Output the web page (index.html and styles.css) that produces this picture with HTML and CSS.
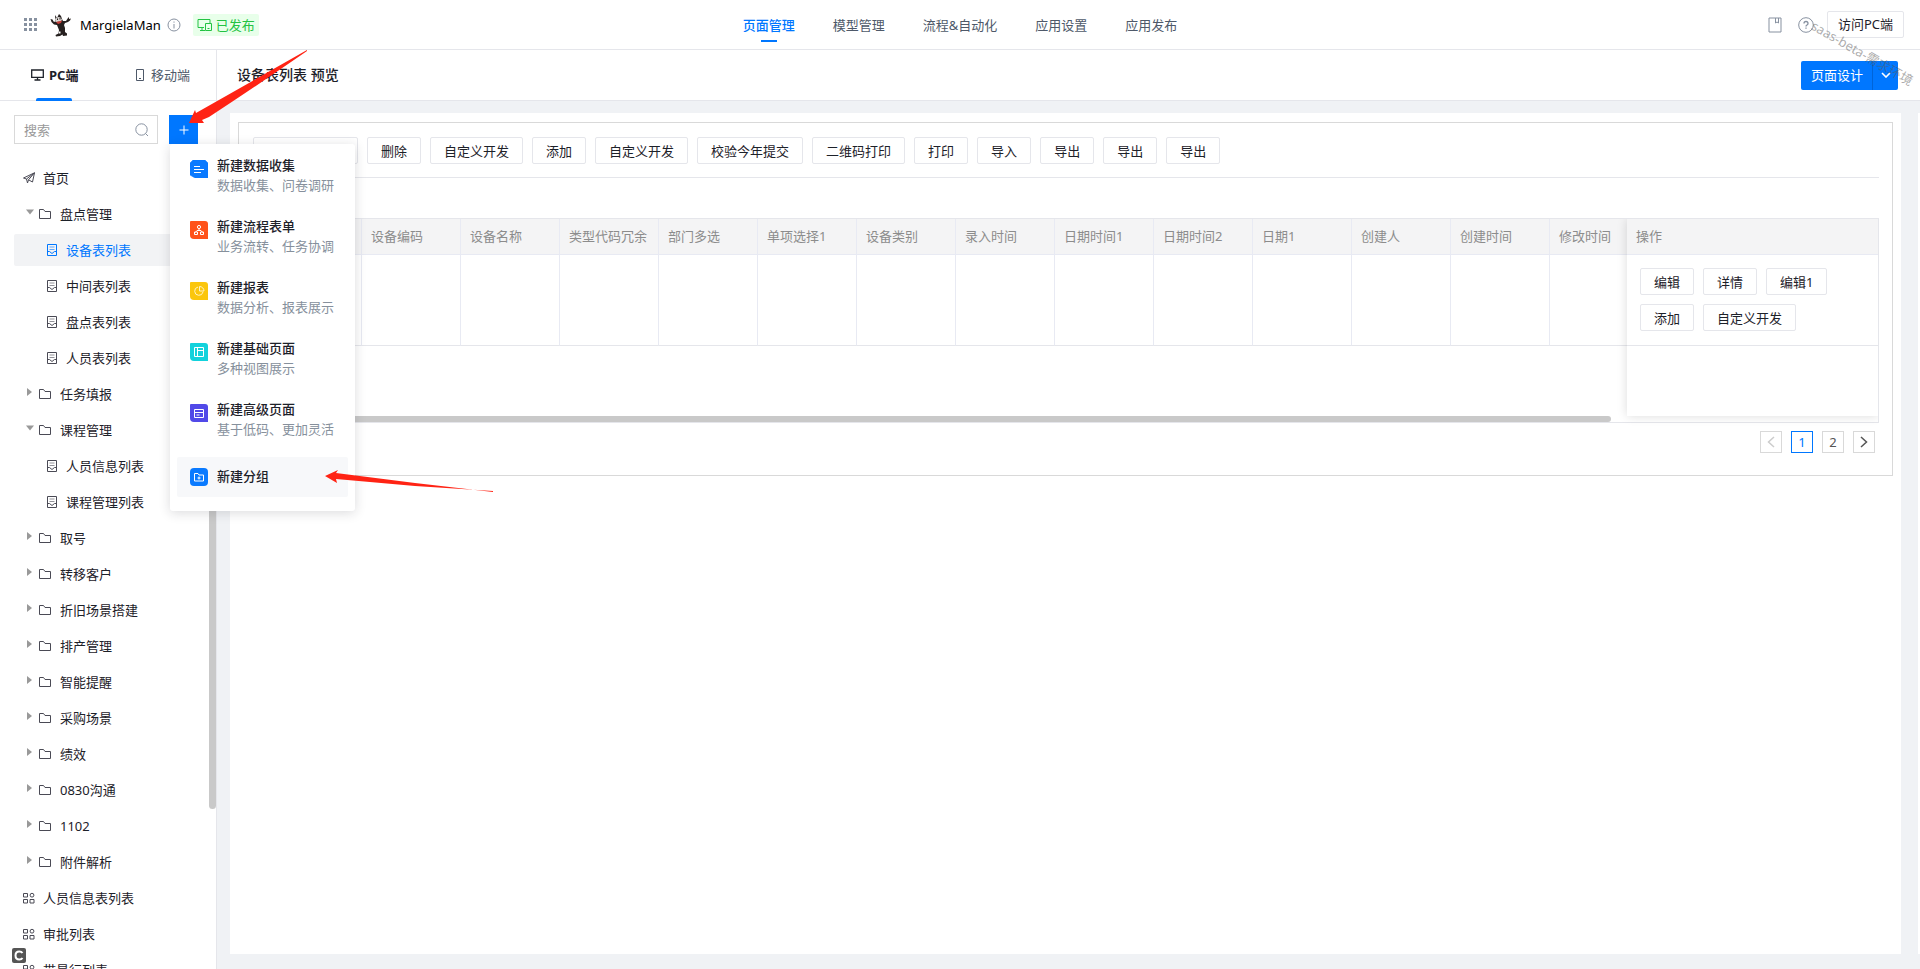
FILE: index.html
```html
<!DOCTYPE html>
<html lang="zh-CN">
<head>
<meta charset="utf-8">
<title>MargielaMan</title>
<link rel="stylesheet" href="styles.css">
</head>
<body>
<svg class="defs" aria-hidden="true">
  <symbol id="folder" viewBox="0 0 12 12"><path d="M.5 1.500h4l1.500 2h5.500v7H.5z" fill="none" stroke="currentColor"/></symbol>
  <symbol id="page" viewBox="0 0 12 12"><path d="M1.500.5h9v11h-9zM1.500 7.500h2L6 9.500l2.500-2h2" fill="none" stroke="currentColor"/><path d="M3.500 3h5M3.500 5.500h5" stroke="currentColor" stroke-opacity=".6"/></symbol>
  <symbol id="apps" viewBox="0 0 12 12"><g fill="none" stroke="currentColor"><path d="M.5 1.500h4v3.500h-4zM.5 7.500h4v3.500h-4zM7 7.500h4v3.500H7z"/><circle cx="9" cy="3.200" r="1.900"/></g></symbol>
  <symbol id="caret" viewBox="0 0 8 8"><path d="M1 0l5 4-5 4z" fill="#999"/></symbol>
  <symbol id="caret-open" viewBox="0 0 8 8"><path d="M0 1.500h8l-4 5z" fill="#999"/></symbol>
</svg>

<header class="topbar">
  <div class="brand">
    <svg class="grid-icon" viewBox="0 0 13 13" fill="#8791a0"><path d="M0 0h3v3H0zM5 0h3v3H5zM10 0h3v3h-3zM0 5h3v3H0zM5 5h3v3H5zM10 5h3v3h-3zM0 10h3v3H0zM5 10h3v3H5zM10 10h3v3h-3z"/></svg>
    <svg class="logo" viewBox="0 0 22 24"><path d="M5 2l2 3 2-4 2 2 1 3 1 2 3 0 2-3 1-1 0 2 2-.5-1 2-2 1.500-3 1-1 2 1 3 0 4 2 1.500 0 2-4 .5-.5-1.500L10 23l-4 .5-.5-1.500 3-1.500L9 17 7 12 4 11.500 1.500 9 .5 6l2 .5 1 2 2 .5z" fill="#26201f"/><path d="M5 6q4-4 7 .5l-1 2-5 .5z" fill="#d9d5d2"/><path d="M7 5.500h1v1.500H7zM9.500 5h1v1.500h-1z" fill="#26201f"/><path d="M6 9l6-1.500-1 2.500-3 1z" fill="#c9403a"/><path d="M9 18.500h1.500v2H9z" fill="#fff"/></svg>
    <span class="app-name">MargielaMan</span>
    <svg class="info" viewBox="0 0 14 14" fill="none" stroke="#8791a0"><circle cx="7" cy="7" r="6"/><path d="M7 6v4.500M7 3.500v1.200"/></svg>
    <span class="status"><svg viewBox="0 0 15 12" fill="none" stroke="currentColor"><path d="M13 4V.5H1v8h6M3 11.500h5M5 8.500v3M8.500 4.500h6v7h-6zM10.500 9.500h2"/></svg>已发布</span>
  </div>
  <nav class="main-nav">
    <a class="active" href="#">页面管理</a>
    <a href="#">模型管理</a>
    <a href="#">流程&amp;自动化</a>
    <a href="#">应用设置</a>
    <a href="#">应用发布</a>
  </nav>
  <div class="top-actions">
    <svg class="book" viewBox="0 0 14 16" fill="none" stroke="#8791a0"><path d="M1 1h12v14H1zM7.500 1v5l1.500-1 1.500 1V1"/></svg>
    <svg class="help" viewBox="0 0 16 16" fill="none" stroke="#8791a0"><circle cx="8" cy="8" r="7.300"/><path d="M6 6.500q0-2 2-2t2 2q0 1-1 1.500t-1 1.500M8 10.500v1.300" stroke-width="1.300"/></svg>
    <button class="btn visit" type="button">访问PC端</button>
  </div>
  <span class="watermark">saas-beta-需求环境</span>
</header>

<div class="body">
  <aside class="sidebar">
    <div class="tabs" role="tablist">
      <button class="tab active" role="tab" type="button"><svg viewBox="0 0 13 12" fill="none" stroke="currentColor" stroke-width="1.300"><path d="M.7 1h11.600v7.300H.7zM6.500 8.300v2.500M3.500 11h6"/></svg>PC端</button>
      <button class="tab" role="tab" type="button"><svg class="phone" viewBox="0 0 8 12" fill="none" stroke="currentColor"><path d="M.5.5h7v11h-7zM3 9.500h2"/></svg>移动端</button>
    </div>
    <div class="search-row">
      <label class="search"><input type="text" placeholder="搜索" aria-label="搜索"><svg viewBox="0 0 14 14" fill="none" stroke="#8791a0"><circle cx="6.500" cy="6.500" r="5.700"/><path d="M10.500 10.500l2.500 2.500"/></svg></label>
      <button class="add" type="button" aria-label="新建"><svg viewBox="0 0 10 10"><path d="M5 .5v9M.5 5h9" stroke="#fff"/></svg></button>
    </div>
    <div class="tree-wrap">
      <ul class="tree">
        <li class="root"><svg viewBox="0 0 12 12" fill="none" stroke="currentColor"><path d="M.5 6L11.500.8 9.500 10 5.500 7.800 4.500 11 3.500 7zM3.500 7L11.500.8 5.500 7.800"/></svg>首页</li>
        <li class="group"><svg class="caret"><use href="#caret-open"/></svg><svg><use href="#folder"/></svg>盘点管理</li>
        <li class="leaf selected"><svg><use href="#page"/></svg>设备表列表</li>
        <li class="leaf"><svg><use href="#page"/></svg>中间表列表</li>
        <li class="leaf"><svg><use href="#page"/></svg>盘点表列表</li>
        <li class="leaf"><svg><use href="#page"/></svg>人员表列表</li>
        <li class="group"><svg class="caret"><use href="#caret"/></svg><svg><use href="#folder"/></svg>任务填报</li>
        <li class="group"><svg class="caret"><use href="#caret-open"/></svg><svg><use href="#folder"/></svg>课程管理</li>
        <li class="leaf"><svg><use href="#page"/></svg>人员信息列表</li>
        <li class="leaf"><svg><use href="#page"/></svg>课程管理列表</li>
        <li class="group"><svg class="caret"><use href="#caret"/></svg><svg><use href="#folder"/></svg>取号</li>
        <li class="group"><svg class="caret"><use href="#caret"/></svg><svg><use href="#folder"/></svg>转移客户</li>
        <li class="group"><svg class="caret"><use href="#caret"/></svg><svg><use href="#folder"/></svg>折旧场景搭建</li>
        <li class="group"><svg class="caret"><use href="#caret"/></svg><svg><use href="#folder"/></svg>排产管理</li>
        <li class="group"><svg class="caret"><use href="#caret"/></svg><svg><use href="#folder"/></svg>智能提醒</li>
        <li class="group"><svg class="caret"><use href="#caret"/></svg><svg><use href="#folder"/></svg>采购场景</li>
        <li class="group"><svg class="caret"><use href="#caret"/></svg><svg><use href="#folder"/></svg>绩效</li>
        <li class="group"><svg class="caret"><use href="#caret"/></svg><svg><use href="#folder"/></svg>0830沟通</li>
        <li class="group"><svg class="caret"><use href="#caret"/></svg><svg><use href="#folder"/></svg>1102</li>
        <li class="group"><svg class="caret"><use href="#caret"/></svg><svg><use href="#folder"/></svg>附件解析</li>
        <li class="root"><svg><use href="#apps"/></svg>人员信息表列表</li>
        <li class="root"><svg><use href="#apps"/></svg>审批列表</li>
        <li class="root"><svg><use href="#apps"/></svg>带最行列表</li>
      </ul>
      <div class="side-scroll"></div>
    </div>

    <div class="create-menu" role="menu">
      <button class="create" type="button" role="menuitem"><svg viewBox="0 0 18 18"><path d="M3 0h12l3 3v15H5L0 15V3z" fill="#0a7aff" stroke="#0a7aff" stroke-linejoin="round" stroke-width=".5"/><path d="M4 6.500h6M4 9.500h10M4 12.500h7" stroke="#fff"/></svg><span><b>新建数据收集</b><small>数据收集、问卷调研</small></span></button>
      <button class="create" type="button" role="menuitem"><svg viewBox="0 0 18 18"><path d="M1 0h14q3 0 3 3v15H4q-4 0-4-4V1q0-1 1-1z" fill="#ff5219"/><g fill="none" stroke="#fff"><circle cx="9" cy="6" r="1.600"/><path d="M9 7.500v2M5.500 11.500l1.500-2h4l1.500 2"/><path d="M4.500 11h3v2.500h-3zM10.500 11h3v2.500h-3z"/></g></svg><span><b>新建流程表单</b><small>业务流转、任务协调</small></span></button>
      <button class="create" type="button" role="menuitem"><svg viewBox="0 0 18 18"><path d="M1 0h14q3 0 3 3v15H4q-4 0-4-4V1q0-1 1-1z" fill="#fbc60d"/><path d="M8 5a4.200 4.200 0 1 0 5 5M9.500 4.500V9H14A4.500 4.500 0 0 0 9.500 4.500z" fill="none" stroke="#fff3c4"/></svg><span><b>新建报表</b><small>数据分析、报表展示</small></span></button>
      <button class="create" type="button" role="menuitem"><svg viewBox="0 0 18 18"><path d="M1 0h14q3 0 3 3v15H4q-4 0-4-4V1q0-1 1-1z" fill="#12d2dc"/><path d="M4.500 4.500h9v9h-9zM7.500 4.500v9M7.500 7.500h6" fill="none" stroke="#fff"/></svg><span><b>新建基础页面</b><small>多种视图展示</small></span></button>
      <button class="create" type="button" role="menuitem"><svg viewBox="0 0 18 18"><path d="M1 0h14q3 0 3 3v15H4q-4 0-4-4V1q0-1 1-1z" fill="#5149e8"/><path d="M4.500 5.500h9v8h-9zM4.500 8.500h9M6.500 11h3" fill="none" stroke="#fff"/></svg><span><b>新建高级页面</b><small>基于低码、更加灵活</small></span></button>
      <button class="create hover" type="button" role="menuitem"><svg viewBox="0 0 18 18"><rect width="18" height="18" rx="4" fill="#0a7aff"/><path d="M4.500 5.500h3.500l1 1.500h4.500v6h-9zM9 8.500v3M7.500 10h3" fill="none" stroke="#fff"/></svg><span><b>新建分组</b></span></button>
    </div>
    <span class="corner-badge"><svg viewBox="0 0 14 15"><rect width="14" height="15" rx="2" fill="#555"/><path d="M10.500 5Q9.500 3.500 7.300 3.500 3.500 3.500 3.500 7.500t3.800 4Q9.500 11.500 10.500 10" fill="none" stroke="#fff" stroke-width="2"/></svg></span>
  </aside>

  <main class="main">
    <div class="page-head">
      <h1>设备表列表 预览</h1>
      <div class="split">
        <button type="button">页面设计</button>
        <button class="drop" type="button" aria-label="更多"><svg viewBox="0 0 10 6"><path d="M1 1l4 4 4-4" fill="none" stroke="#fff" stroke-width="1.600"/></svg></button>
      </div>
    </div>
    <div class="canvas">
      <div class="panel">
        <section class="frame">
          <div class="toolbar">
            <button class="btn first" type="button"></button>
            <button class="btn" type="button">删除</button>
            <button class="btn" type="button">自定义开发</button>
            <button class="btn" type="button">添加</button>
            <button class="btn" type="button">自定义开发</button>
            <button class="btn" type="button">校验今年提交</button>
            <button class="btn" type="button">二维码打印</button>
            <button class="btn" type="button">打印</button>
            <button class="btn" type="button">导入</button>
            <button class="btn" type="button">导出</button>
            <button class="btn" type="button">导出</button>
            <button class="btn" type="button">导出</button>
          </div>
          <div class="grid">
            <div class="cols">
              <table>
                <thead><tr><th class="lead"></th><th>设备编码</th><th>设备名称</th><th>类型代码冗余</th><th>部门多选</th><th>单项选择1</th><th>设备类别</th><th>录入时间</th><th>日期时间1</th><th>日期时间2</th><th>日期1</th><th>创建人</th><th>创建时间</th><th class="last">修改时间</th></tr></thead>
                <tbody><tr><td></td><td></td><td></td><td></td><td></td><td></td><td></td><td></td><td></td><td></td><td></td><td></td><td></td><td></td></tr></tbody>
              </table>
              <div class="h-scroll"></div>
            </div>
            <div class="fixed">
              <div class="fixed-head">操作</div>
              <div class="fixed-cell">
                <button class="btn" type="button">编辑</button>
                <button class="btn" type="button">详情</button>
                <button class="btn" type="button">编辑1</button>
                <button class="btn" type="button">添加</button>
                <button class="btn" type="button">自定义开发</button>
              </div>
            </div>
          </div>
          <nav class="pager" aria-label="分页">
            <button type="button" disabled aria-label="上一页"><svg viewBox="0 0 8 12"><path d="M7 1L1.500 6 7 11" fill="none" stroke="currentColor" stroke-width="1.500"/></svg></button>
            <button class="current" type="button">1</button>
            <button type="button">2</button>
            <button type="button" aria-label="下一页"><svg viewBox="0 0 8 12"><path d="M1 1l5.500 5L1 11" fill="none" stroke="currentColor" stroke-width="1.500"/></svg></button>
          </nav>
        </section>
      </div>
      <div class="edge"></div>
    </div>
  </main>
</div>

<svg class="arrow arrow-a" viewBox="0 0 120 76"><path d="M118 1L7 64 6 61 0 74 15 74 13 71 20 68Q60 42 118 2z" fill="#ff2314"/></svg>
<svg class="arrow arrow-b" viewBox="0 0 170 26"><path d="M0 10L13 4 11 7 90 17 168 26 168 25 90 20 11 13 12 17z" fill="#ff2314"/></svg>
</body>
</html>
```
FILE: styles.css
```css
* { box-sizing: border-box; }
html, body { height: 100%; }
body {
  margin: 0;
  display: flex;
  flex-direction: column;
  overflow: hidden;
  background: #fff;
  color: #1d2129;
  font: 13px/20px "Noto Sans", "Noto Sans CJK SC", sans-serif;
}
button, input { font: inherit; color: inherit; }
button { padding: 0; border: 0; background: none; cursor: pointer; white-space: nowrap; }
svg { flex: none; display: block; }
.defs { position: absolute; width: 0; height: 0; }

.topbar {
  position: relative;
  flex: none;
  height: 50px;
  display: grid;
  grid-template-columns: 1fr auto 1fr;
  align-items: center;
  border-bottom: 1px solid #e5e6eb;
}
.brand { display: flex; align-items: center; padding-left: 24px; }
.grid-icon { width: 13px; height: 13px; }
.logo { width: 22px; height: 24px; margin: 0 8px 0 13px; }
.app-name { color: #000; }
.info { width: 14px; height: 14px; margin: 0 12px 0 6px; }
.status {
  display: flex; align-items: center; gap: 4px;
  height: 22px; padding: 0 4px;
  border-radius: 2px; background: #e8ffea; color: #23c343;
}
.status svg { width: 15px; height: 12px; }
.main-nav { display: flex; gap: 38px; height: 49px; }
.main-nav a { position: relative; line-height: 50px; color: #4e5969; text-decoration: none; }
.main-nav .active { color: #0077ff; font-weight: 500; }
.main-nav .active::after {
  content: ""; position: absolute; left: 50%; bottom: 7px;
  width: 16px; height: 2px; margin-left: -8px; background: #0077ff;
}
.top-actions { display: flex; align-items: center; justify-content: flex-end; padding-right: 16px; }
.book { width: 14px; height: 16px; }
.help { width: 16px; height: 16px; margin: 0 13px 0 16px; }
.btn {
  height: 27px; padding: 2px 13px 0;
  border: 1px solid #e5e6eb; border-radius: 2px;
  background: #fff; color: #1d2129; line-height: 23px;
}
.visit { padding: 0 10px; }
.watermark {
  position: absolute; right: 0; top: 43px; z-index: 5;
  color: rgba(90, 90, 90, .5);
  transform: rotate(30deg); pointer-events: none; white-space: nowrap;
}

.body { flex: 1; display: flex; min-height: 0; }
.sidebar {
  position: relative; flex: none; width: 217px;
  display: flex; flex-direction: column;
  border-right: 1px solid #e5e6eb;
}
.tabs { flex: none; height: 51px; display: flex; padding: 0 26px 0 31px; justify-content: space-between; border-bottom: 1px solid #e5e6eb; }
.tab { position: relative; display: flex; align-items: center; gap: 5px; color: #4e5969; }
.tab svg { width: 13px; height: 12px; }
.tab .phone { width: 8px; margin-right: 2px; }
.tab.active { color: #1d2129; font-weight: 700; }
.tab.active::after { content: ""; position: absolute; left: 5px; bottom: -1px; width: 36px; height: 3px; border-radius: 2px 2px 0 0; background: #0077ff; }
.search-row { flex: none; display: flex; justify-content: space-between; padding: 14px 18px 18px 14px; }
.search { display: flex; align-items: center; width: 144px; height: 29px; padding: 0 8px 0 9px; border: 1px solid #d9d9d9; }
.search input { flex: 1; min-width: 0; padding: 0; border: 0; outline: 0; background: none; }
.search input::placeholder { color: #999; }
.search svg { width: 14px; height: 14px; }
.add { display: flex; align-items: center; justify-content: center; width: 29px; height: 29px; background: #0077ff; }
.add svg { width: 10px; height: 10px; }
.tree-wrap { flex: 1; min-height: 0; display: flex; overflow: hidden; }
.tree { flex: 1; display: flex; flex-direction: column; gap: 4px; margin: 0; padding: 0 0 0 14px; list-style: none; }
.tree li { flex: none; display: flex; align-items: center; height: 32px; padding-left: 9px; border-radius: 2px; }
.tree li svg { width: 12px; height: 12px; margin-right: 8px; color: #4a4a55; }
.tree .group svg { margin-right: 9px; }
.tree .group .caret { width: 8px; height: 8px; margin: 0 5px 4px 3px; }
.tree .leaf { padding-left: 32px; }
.tree .selected { background: #f2f3f5; color: #0077ff; }
.tree .selected svg { color: #0077ff; }
.side-scroll { width: 7px; height: 647px; border-radius: 4px; background: #c9c9c9; }
.corner-badge { position: absolute; left: 12px; bottom: 6px; }
.corner-badge svg { width: 14px; height: 15px; }

.create-menu {
  position: absolute; left: 170px; top: 94px; z-index: 10;
  width: 185px; padding: 11px 7px 14px;
  border-radius: 3px; background: #fff;
  box-shadow: 0 2px 12px rgba(29, 33, 41, .16);
}
.create { display: flex; width: 100%; height: 61px; padding: 0 13px; gap: 9px; text-align: left; }
.create svg { width: 18px; height: 18px; margin-top: 5px; }
.create b, .create small { display: block; font-size: 13px; font-weight: 500; line-height: 20px; }
.create small { font-weight: 400; color: #86909c; }
.create.hover { height: 40px; margin-top: -3px; padding-top: 9px; background: #f7f8fa; border-radius: 2px; }
.create.hover svg { margin-top: 2px; }

.main { flex: 1; min-width: 0; display: flex; flex-direction: column; }
.page-head { flex: none; height: 51px; display: flex; align-items: center; justify-content: space-between; padding: 0 22px 0 20px; border-bottom: 1px solid #e5e6eb; }
.page-head h1 { margin: 0; font-size: 14px; font-weight: 500; }
.split { display: flex; height: 29px; border-radius: 2px; background: #0077ff; color: #fff; }
.split button { padding: 0 9px 0 10px; color: #fff; }
.split .drop { width: 26px; padding: 0 8px; border-left: 1px solid #0064d8; }
.drop svg { width: 10px; height: 6px; }
.canvas { flex: 1; min-height: 0; display: flex; gap: 17px; padding: 12px 0 15px 13px; background: #f0f2f5; }
.panel { flex: 1; min-width: 0; padding: 9px 8px; background: #fff; }
.edge { width: 2px; background: #fff; }
.frame { border: 1px solid #d9d9d9; padding: 0 13px 22px; }
.toolbar { display: flex; gap: 9px; padding: 14px 0 13px 1px; border-bottom: 1px solid #e5e6eb; }
.toolbar .first { width: 105px; }
.grid { position: relative; display: flex; height: 205px; margin-top: 40px; border: 1px solid #e5e6eb; border-left: 0; }
.cols { position: relative; flex: 1; min-width: 0; overflow: hidden; }
.cols table { width: 100%; border-collapse: separate; border-spacing: 0; table-layout: fixed; }
.cols th { height: 36px; padding: 0 9px 2px; border-right: 1px solid #e8eaf3; border-bottom: 1px solid #e8eaf3; background: #f4f4f5; color: #8c8c8c; font-weight: 400; text-align: left; white-space: nowrap; }
.cols td { height: 91px; border-right: 1px solid #e8eaf3; border-bottom: 1px solid #e5e6eb; }
.cols .lead { width: 110px; }
.cols th:last-child, .cols td:last-child { border-right: 0; }
.cols .last { width: 77px; }
.h-scroll { position: absolute; left: 0; right: 16px; bottom: 0; height: 6px; border-radius: 3px; background: #c9c9c9; }
.fixed { position: relative; flex: none; width: 251px; height: 197px; background: #fff; box-shadow: 0 0 10px rgba(0, 0, 0, .14); clip-path: inset(0 0 -10px -12px); }
.fixed-head { height: 36px; padding-left: 9px; border-bottom: 1px solid #e8eaf3; background: #f4f4f5; color: #8c8c8c; line-height: 34px; }
.fixed-cell { display: flex; flex-wrap: wrap; align-content: flex-start; gap: 9px; height: 91px; padding: 13px 13px 0; border-bottom: 1px solid #e5e6eb; }
.pager { display: flex; justify-content: flex-end; gap: 9px; padding: 8px 4px 0 0; }
.pager button { display: flex; align-items: center; justify-content: center; width: 22px; height: 22px; border: 1px solid #d9d9d9; background: #fff; color: #555; }
.pager svg { width: 8px; height: 12px; }
.pager button:disabled { color: #ccc; }
.pager .current { border-color: #0077ff; color: #0077ff; }

.arrow { position: absolute; z-index: 20; pointer-events: none; }
.arrow-a { left: 189px; top: 49px; width: 120px; height: 76px; }
.arrow-b { left: 325px; top: 466px; width: 170px; height: 26px; overflow: visible; }
```
